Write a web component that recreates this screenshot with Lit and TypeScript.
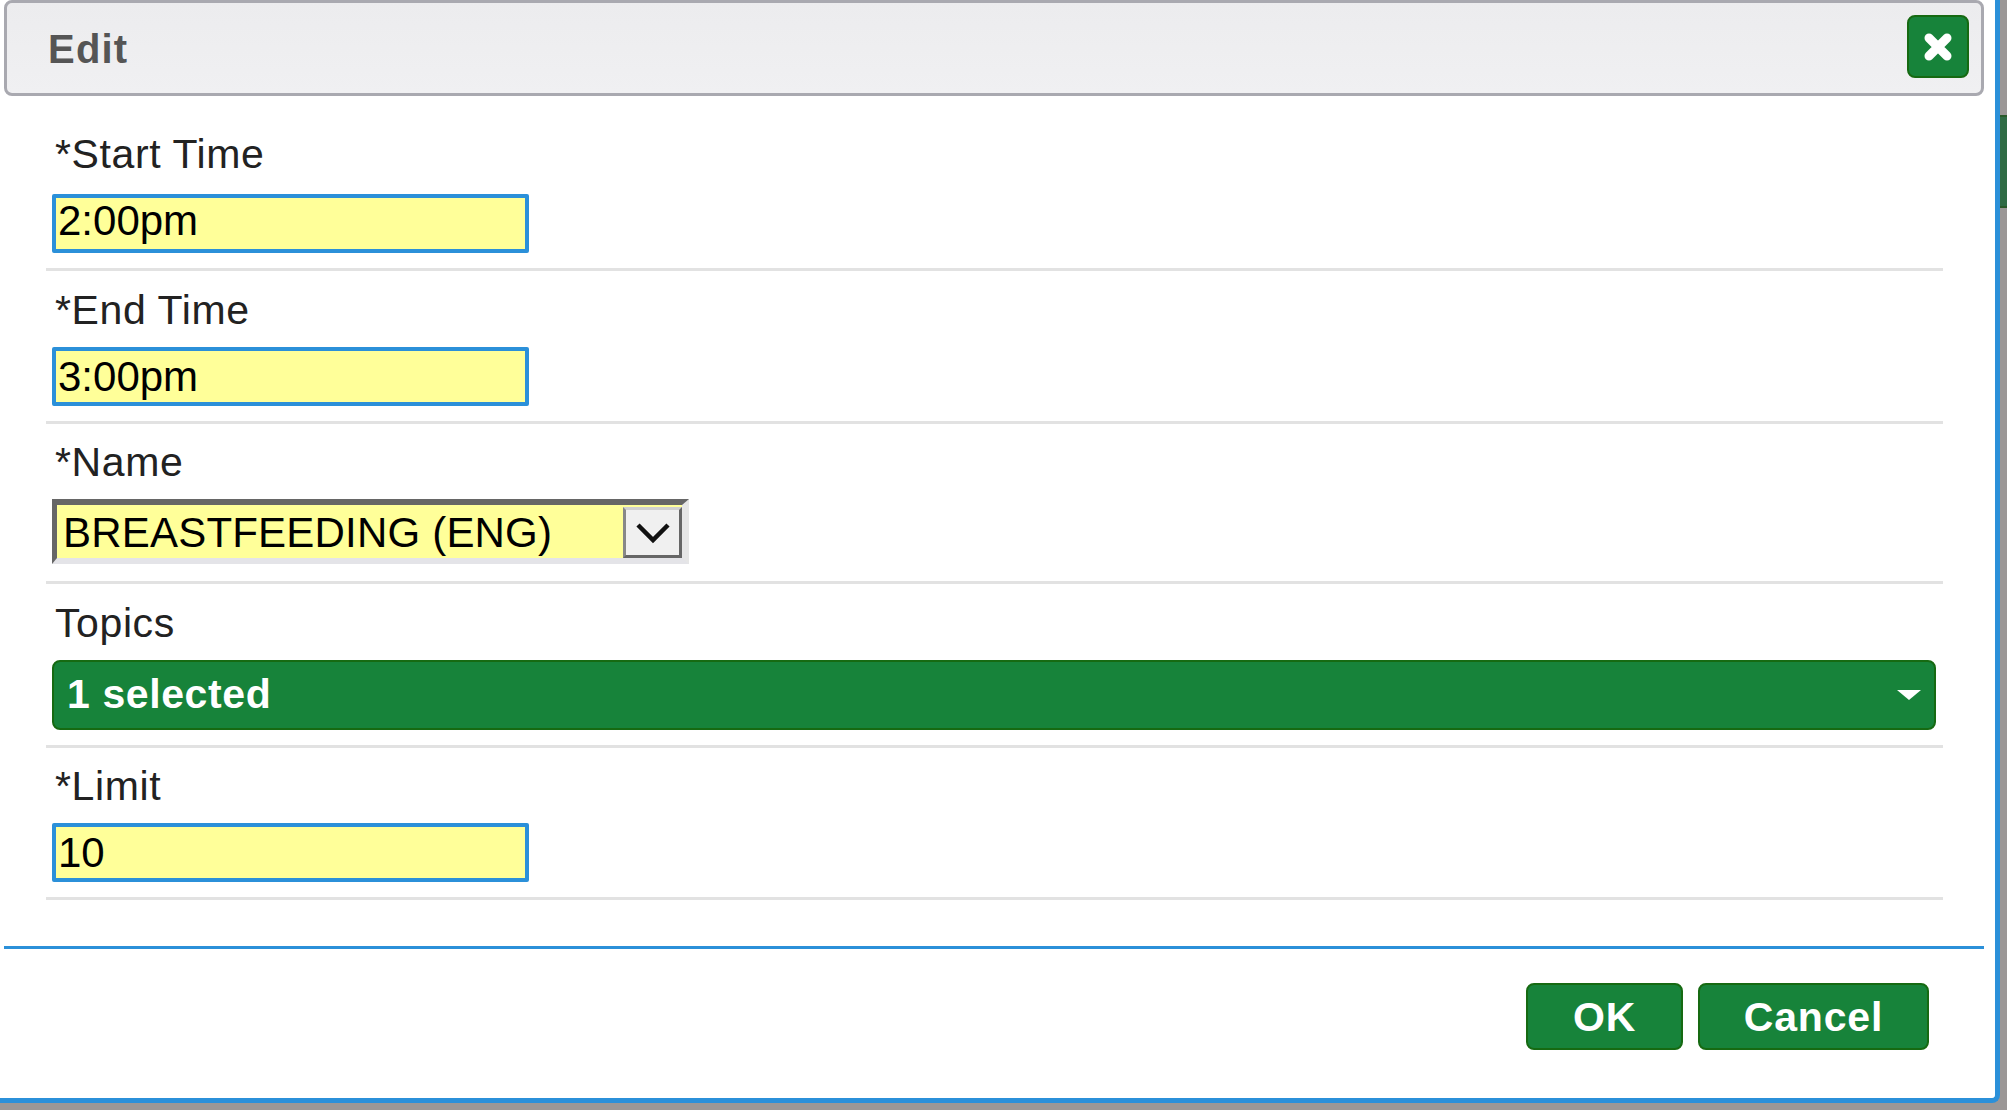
import { LitElement, css, html } from "lit";
import { customElement } from "lit/decorators.js";

interface Field {
  label: string;
  value: string;
}

@customElement("app-root")
export class AppRoot extends LitElement {
  static styles = css`
    :host {
      display: flex;
      width: 2007px;
      height: 1110px;
      background: #9b9796;
      font-family: "Liberation Sans", Arial, sans-serif;
      overflow: hidden;
    }
    .dialog {
      box-sizing: border-box;
      width: 2000px;
      height: 1103px;
      background: #fff;
      border-right: 5px solid #2b90d9;
      border-bottom: 5px solid #2b90d9;
      border-bottom-right-radius: 8px;
      display: flex;
      flex-direction: column;
      padding-left: 4px;
      padding-right: 11px;
    }
    .strip {
      width: 7px;
      height: 1110px;
      display: flex;
      flex-direction: column;
      background: #9b9796;
    }
    .thumb {
      margin-top: 115px;
      height: 93px;
      background: #2f6b45;
      border-top: 2px solid #2a5a2a;
      border-bottom: 2px solid #2a5a2a;
      box-sizing: border-box;
    }
    .header {
      box-sizing: border-box;
      height: 96px;
      flex: none;
      display: flex;
      align-items: center;
      justify-content: space-between;
      background: linear-gradient(#ececee, #f0f0f2);
      border: 3px solid #a9a9b0;
      border-radius: 8px;
      padding: 0 12px 0 41px;
    }
    .title {
      font-size: 40px;
      font-weight: bold;
      color: #555;
      letter-spacing: 1.2px;
      margin-top: 2px;
    }
    .close {
      box-sizing: border-box;
      width: 62px;
      height: 63px;
      margin-bottom: 3px;
      display: flex;
      align-items: center;
      justify-content: center;
      background: #17833a;
      border: 2px solid #166a12;
      border-radius: 8px;
    }
    .body {
      padding: 0 41px 0 42px;
      margin-top: 36px;
    }
    .row {
      border-bottom: 3px solid #e2e2e2;
      margin-bottom: 16.5px;
      padding-bottom: 15px;
    }
    .row.tall {
      padding-bottom: 17px;
    }
    .label {
      font-size: 41px;
      line-height: 44px;
      letter-spacing: 0.6px;
      color: #222;
      padding-left: 9px;
      margin-bottom: 15px;
    }
    .row:first-child .label {
      margin-bottom: 18px;
    }
    .input {
      box-sizing: border-box;
      width: 477px;
      height: 59px;
      margin-left: 6px;
      border: 4px solid #2b90d9;
      border-radius: 2px;
      background: #ffff99;
      font-size: 42px;
      line-height: 51px;
      color: #000;
      padding-left: 2px;
    }
    .row:first-child .input {
      line-height: 46px;
    }
    .select {
      box-sizing: border-box;
      width: 637px;
      height: 65px;
      margin-left: 6px;
      display: flex;
      background: #ffff99;
      border-style: solid;
      border-width: 6px 7px 6px 5px;
      border-color: #666 #e6e6e6 #e4e4e8 #666;
    }
    .select-value {
      flex: 1;
      font-size: 42px;
      line-height: 55px;
      letter-spacing: 0.2px;
      color: #000;
      padding-left: 6px;
    }
    .select-btn {
      box-sizing: border-box;
      width: 59px;
      margin-top: 2px;
      display: flex;
      align-items: center;
      justify-content: center;
      background: #f0f0f0;
      border: 3px solid;
      border-color: #d0d0d0 #666 #666 #888;
    }
    .multi {
      box-sizing: border-box;
      height: 70px;
      margin: 0 7px 0 6px;
      display: flex;
      align-items: center;
      justify-content: space-between;
      background: #17833a;
      border: 2px solid #166a12;
      border-radius: 8px;
      padding: 0 13px 0 13px;
      color: #fff;
      font-size: 41px;
      font-weight: bold;
      letter-spacing: 0.6px;
    }
    .caret {
      width: 0;
      height: 0;
      border-left: 12px solid transparent;
      border-right: 12px solid transparent;
      border-top: 10px solid #fff;
    }
    .rule {
      flex: none;
      height: 3px;
      background: #2b90d9;
      margin-top: 29px;
    }
    .footer {
      display: flex;
      justify-content: flex-end;
      gap: 15px;
      padding: 34px 55px 0 0;
    }
    .btn {
      box-sizing: border-box;
      height: 67px;
      display: flex;
      align-items: center;
      justify-content: center;
      background: #17833a;
      border: 2px solid #166a12;
      border-radius: 8px;
      color: #fff;
      font-size: 41px;
      font-weight: bold;
      letter-spacing: 0.8px;
      padding-top: 2px;
    }
    .ok {
      width: 157px;
    }
    .cancel {
      width: 231px;
    }
  `;

  renderInput(f: Field) {
    return html`
      <div class="row">
        <div class="label">${f.label}</div>
        <div class="input">${f.value}</div>
      </div>
    `;
  }

  render() {
    return html`
      <div class="dialog">
        <div class="header">
          <span class="title">Edit</span>
          <div class="close">
            <svg width="34" height="34" viewBox="0 0 34 34">
              <path d="M8 8L26 26M26 8L8 26" stroke="#fff" stroke-width="9" stroke-linecap="round" fill="none" />
            </svg>
          </div>
        </div>
        <div class="body">
          ${this.renderInput({ label: "*Start Time", value: "2:00pm" })}
          ${this.renderInput({ label: "*End Time", value: "3:00pm" })}
          <div class="row tall">
            <div class="label">*Name</div>
            <div class="select">
              <div class="select-value">BREASTFEEDING (ENG)</div>
              <div class="select-btn">
                <svg width="36" height="24" viewBox="0 0 36 24">
                  <path d="M3 4L18 19L33 4" stroke="#111" stroke-width="4.5" fill="none" />
                </svg>
              </div>
            </div>
          </div>
          <div class="row">
            <div class="label">Topics</div>
            <div class="multi"><span>1 selected</span><span class="caret"></span></div>
          </div>
          ${this.renderInput({ label: "*Limit", value: "10" })}
        </div>
        <div class="rule"></div>
        <div class="footer">
          <div class="btn ok">OK</div>
          <div class="btn cancel">Cancel</div>
        </div>
      </div>
      <div class="strip"><div class="thumb"></div></div>
    `;
  }
}
